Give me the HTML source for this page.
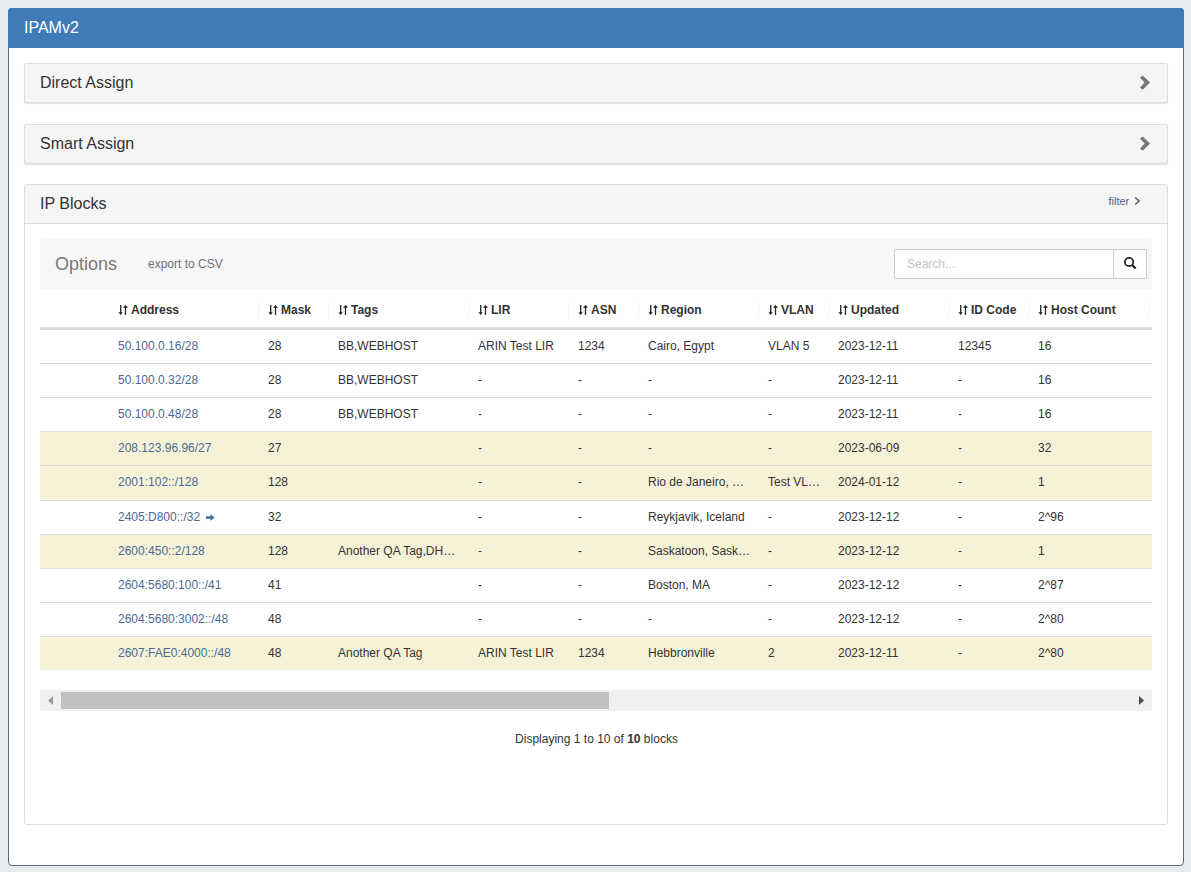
<!DOCTYPE html>
<html><head><meta charset="utf-8">
<style>
*{box-sizing:border-box;margin:0;padding:0}
html,body{width:1191px;height:872px;overflow:hidden}
body{background:#e9ecef;font-family:"Liberation Sans",sans-serif;color:#333;font-size:12px;position:relative}
.abs{position:absolute}
.outer{position:absolute;left:8px;top:8px;width:1176px;height:858px;border:1px solid #586c7e;border-radius:4px;background:#fff}
.outer-h{position:absolute;left:8px;top:8px;width:1176px;height:40px;background:#3e7bb8;border-radius:4px 4px 0 0;color:#fff;font-size:16px;padding-left:16px;line-height:39px}
.pnl{position:absolute;left:24px;width:1144px;height:40px;background:#f5f5f5;border:1px solid #ddd;border-radius:2px;box-shadow:0 1px 1px rgba(0,0,0,.12)}
.ptitle{position:absolute;left:40px;font-size:16px;line-height:18px;color:#333}
.ipb{position:absolute;left:24px;top:184px;width:1144px;height:641px;border:1px solid #ddd;border-radius:3px;background:#fff}
.ipb-h{position:absolute;left:25px;top:185px;width:1142px;height:39px;background:#f5f5f5;border-bottom:1px solid #ddd;border-radius:3px 3px 0 0}
.filter{position:absolute;left:1108.5px;top:193px;color:#45638a;font-size:11px;line-height:16px}
.opts{position:absolute;left:40px;top:238px;width:1112px;height:51px;background:#f7f7f7;border-radius:4px}
.o{position:absolute;left:55px;top:253px;line-height:22px;font-size:18px;color:#777}
.e{position:absolute;left:148px;top:257px;line-height:15px;font-size:12px;color:#707070}
.search{position:absolute;left:894px;top:249px;width:220px;height:30px;border:1px solid #ccc;border-radius:2px 0 0 2px;background:#fff;color:#c4c4c4;font-size:12px;line-height:28px;padding-left:12px}
.sbtn{position:absolute;left:1113px;top:249px;width:34px;height:30px;border:1px solid #ccc;border-radius:0 2px 2px 0;background:#fff}
.th{position:absolute;top:302px;line-height:17px;font-weight:bold;font-size:12px;color:#333;white-space:nowrap}
.th .si{position:relative;top:1px;margin-right:3px;vertical-align:baseline}
.sep{position:absolute;top:303px;width:1px;height:15px;background:#f4f4f4}
.hb{position:absolute;left:40px;top:327px;width:1112px;height:3px;background:#dadada}
.tr{position:absolute;left:40px;width:1112px}
.tr.y{background:#f6f2d8}
.tr.bt{border-top:1px solid #ddd}
.td{position:absolute;padding-top:8px;line-height:17px;font-size:12px;color:#333;white-space:nowrap}
.td.a{color:#4b6b93}
.arr{margin-left:2px;vertical-align:-1px}
.sb{position:absolute;left:40px;top:690px;width:1112px;height:21px;background:#f0f0f0}
.thumb{position:absolute;left:61px;top:692px;width:548px;height:17px;background:#c1c1c1}
.disp{position:absolute;left:1px;width:1191px;top:732px;text-align:center;line-height:15px;font-size:12px;color:#333}
</style></head><body>
<div class="outer"></div>
<div class="outer-h">IPAMv2</div>
<div class="pnl" style="top:63px"></div>
<div class="ptitle" style="top:74px">Direct Assign</div>
<div class="pnl" style="top:124px"></div>
<div class="ptitle" style="top:135px">Smart Assign</div>
<svg class="abs" style="left:0;top:0" width="1191" height="200"><polygon points="1140,77.7 1142.6,75.6 1150.1,82.5 1142.6,89.8 1140,87.4 1144.6,82.5" fill="#777"/><polygon points="1140,138.7 1142.6,136.6 1150.1,143.5 1142.6,150.8 1140,148.4 1144.6,143.5" fill="#777"/></svg>
<div class="ipb"></div>
<div class="ipb-h"></div>
<div class="ptitle" style="top:195px">IP Blocks</div>
<div class="filter">filter</div>
<svg class="abs" style="left:1133px;top:196px" width="9" height="10"><path d="M2.2 1.6 L6.2 5 L2.2 8.4" fill="none" stroke="#44546a" stroke-width="1.3"/></svg>
<div class="opts"></div>
<div class="o">Options</div>
<div class="e">export to CSV</div>
<div class="search">Search...</div>
<div class="sbtn"></div>
<svg class="abs" style="left:1122px;top:255px" width="16" height="16"><circle cx="7.1" cy="7" r="4.2" fill="none" stroke="#222" stroke-width="1.8"/><path d="M9.9 9.8 L13.6 13.5" stroke="#222" stroke-width="2.3"/></svg>
<div class="th" style="left:118px"><svg class="si" width="10" height="10" viewBox="0 0 10 10"><path d="M2.05 0h1.3v7.2h1.45L2.7 9.9 0.4 7.2h1.65z M6.85 9.9h1.3V2.8h1.85L7.5 0 5 2.8h1.85z" fill="#222"/></svg><span>Address</span></div>
<div class="th" style="left:268px"><svg class="si" width="10" height="10" viewBox="0 0 10 10"><path d="M2.05 0h1.3v7.2h1.45L2.7 9.9 0.4 7.2h1.65z M6.85 9.9h1.3V2.8h1.85L7.5 0 5 2.8h1.85z" fill="#222"/></svg><span>Mask</span></div>
<div class="th" style="left:338px"><svg class="si" width="10" height="10" viewBox="0 0 10 10"><path d="M2.05 0h1.3v7.2h1.45L2.7 9.9 0.4 7.2h1.65z M6.85 9.9h1.3V2.8h1.85L7.5 0 5 2.8h1.85z" fill="#222"/></svg><span>Tags</span></div>
<div class="th" style="left:478px"><svg class="si" width="10" height="10" viewBox="0 0 10 10"><path d="M2.05 0h1.3v7.2h1.45L2.7 9.9 0.4 7.2h1.65z M6.85 9.9h1.3V2.8h1.85L7.5 0 5 2.8h1.85z" fill="#222"/></svg><span>LIR</span></div>
<div class="th" style="left:578px"><svg class="si" width="10" height="10" viewBox="0 0 10 10"><path d="M2.05 0h1.3v7.2h1.45L2.7 9.9 0.4 7.2h1.65z M6.85 9.9h1.3V2.8h1.85L7.5 0 5 2.8h1.85z" fill="#222"/></svg><span>ASN</span></div>
<div class="th" style="left:648px"><svg class="si" width="10" height="10" viewBox="0 0 10 10"><path d="M2.05 0h1.3v7.2h1.45L2.7 9.9 0.4 7.2h1.65z M6.85 9.9h1.3V2.8h1.85L7.5 0 5 2.8h1.85z" fill="#222"/></svg><span>Region</span></div>
<div class="th" style="left:768px"><svg class="si" width="10" height="10" viewBox="0 0 10 10"><path d="M2.05 0h1.3v7.2h1.45L2.7 9.9 0.4 7.2h1.65z M6.85 9.9h1.3V2.8h1.85L7.5 0 5 2.8h1.85z" fill="#222"/></svg><span>VLAN</span></div>
<div class="th" style="left:838px"><svg class="si" width="10" height="10" viewBox="0 0 10 10"><path d="M2.05 0h1.3v7.2h1.45L2.7 9.9 0.4 7.2h1.65z M6.85 9.9h1.3V2.8h1.85L7.5 0 5 2.8h1.85z" fill="#222"/></svg><span>Updated</span></div>
<div class="th" style="left:958px"><svg class="si" width="10" height="10" viewBox="0 0 10 10"><path d="M2.05 0h1.3v7.2h1.45L2.7 9.9 0.4 7.2h1.65z M6.85 9.9h1.3V2.8h1.85L7.5 0 5 2.8h1.85z" fill="#222"/></svg><span>ID Code</span></div>
<div class="th" style="left:1038px"><svg class="si" width="10" height="10" viewBox="0 0 10 10"><path d="M2.05 0h1.3v7.2h1.45L2.7 9.9 0.4 7.2h1.65z M6.85 9.9h1.3V2.8h1.85L7.5 0 5 2.8h1.85z" fill="#222"/></svg><span>Host Count</span></div>
<div class="sep" style="left:258px"></div>
<div class="sep" style="left:328px"></div>
<div class="sep" style="left:468px"></div>
<div class="sep" style="left:568px"></div>
<div class="sep" style="left:638px"></div>
<div class="sep" style="left:758px"></div>
<div class="sep" style="left:828px"></div>
<div class="sep" style="left:948px"></div>
<div class="sep" style="left:1028px"></div>
<div class="sep" style="left:1148px"></div>
<div class="tr" style="top:329px;height:34px"></div>
<div class="td a" style="left:118px;top:330px">50.100.0.16/28</div>
<div class="td" style="left:268px;top:330px">28</div>
<div class="td" style="left:338px;top:330px">BB,WEBHOST</div>
<div class="td" style="left:478px;top:330px">ARIN Test LIR</div>
<div class="td" style="left:578px;top:330px">1234</div>
<div class="td" style="left:648px;top:330px">Cairo, Egypt</div>
<div class="td" style="left:768px;top:330px">VLAN 5</div>
<div class="td" style="left:838px;top:330px">2023-12-11</div>
<div class="td" style="left:958px;top:330px">12345</div>
<div class="td" style="left:1038px;top:330px">16</div>
<div class="tr bt" style="top:363px;height:34px"></div>
<div class="td a" style="left:118px;top:364px">50.100.0.32/28</div>
<div class="td" style="left:268px;top:364px">28</div>
<div class="td" style="left:338px;top:364px">BB,WEBHOST</div>
<div class="td" style="left:478px;top:364px">-</div>
<div class="td" style="left:578px;top:364px">-</div>
<div class="td" style="left:648px;top:364px">-</div>
<div class="td" style="left:768px;top:364px">-</div>
<div class="td" style="left:838px;top:364px">2023-12-11</div>
<div class="td" style="left:958px;top:364px">-</div>
<div class="td" style="left:1038px;top:364px">16</div>
<div class="tr bt" style="top:397px;height:34px"></div>
<div class="td a" style="left:118px;top:398px">50.100.0.48/28</div>
<div class="td" style="left:268px;top:398px">28</div>
<div class="td" style="left:338px;top:398px">BB,WEBHOST</div>
<div class="td" style="left:478px;top:398px">-</div>
<div class="td" style="left:578px;top:398px">-</div>
<div class="td" style="left:648px;top:398px">-</div>
<div class="td" style="left:768px;top:398px">-</div>
<div class="td" style="left:838px;top:398px">2023-12-11</div>
<div class="td" style="left:958px;top:398px">-</div>
<div class="td" style="left:1038px;top:398px">16</div>
<div class="tr y bt" style="top:431px;height:34px"></div>
<div class="td a" style="left:118px;top:432px">208.123.96.96/27</div>
<div class="td" style="left:268px;top:432px">27</div>
<div class="td" style="left:478px;top:432px">-</div>
<div class="td" style="left:578px;top:432px">-</div>
<div class="td" style="left:648px;top:432px">-</div>
<div class="td" style="left:768px;top:432px">-</div>
<div class="td" style="left:838px;top:432px">2023-06-09</div>
<div class="td" style="left:958px;top:432px">-</div>
<div class="td" style="left:1038px;top:432px">32</div>
<div class="tr y bt" style="top:465px;height:35px"></div>
<div class="td a" style="left:118px;top:466px">2001:102::/128</div>
<div class="td" style="left:268px;top:466px">128</div>
<div class="td" style="left:478px;top:466px">-</div>
<div class="td" style="left:578px;top:466px">-</div>
<div class="td" style="left:648px;top:466px">Rio de Janeiro, …</div>
<div class="td" style="left:768px;top:466px">Test VL…</div>
<div class="td" style="left:838px;top:466px">2024-01-12</div>
<div class="td" style="left:958px;top:466px">-</div>
<div class="td" style="left:1038px;top:466px">1</div>
<div class="tr bt" style="top:500px;height:34px"></div>
<div class="td a" style="left:118px;top:501px">2405:D800::/32 <svg class="arr" width="11" height="9" viewBox="0 0 11 9"><path d="M1 3.2h4.4V1.3L9.8 4.5 5.4 7.7V5.8H1z" fill="#3f6ea5"/></svg></div>
<div class="td" style="left:268px;top:501px">32</div>
<div class="td" style="left:478px;top:501px">-</div>
<div class="td" style="left:578px;top:501px">-</div>
<div class="td" style="left:648px;top:501px">Reykjavik, Iceland</div>
<div class="td" style="left:768px;top:501px">-</div>
<div class="td" style="left:838px;top:501px">2023-12-12</div>
<div class="td" style="left:958px;top:501px">-</div>
<div class="td" style="left:1038px;top:501px">2^96</div>
<div class="tr y bt" style="top:534px;height:34px"></div>
<div class="td a" style="left:118px;top:535px">2600:450::2/128</div>
<div class="td" style="left:268px;top:535px">128</div>
<div class="td" style="left:338px;top:535px">Another QA Tag,DH…</div>
<div class="td" style="left:478px;top:535px">-</div>
<div class="td" style="left:578px;top:535px">-</div>
<div class="td" style="left:648px;top:535px">Saskatoon, Sask…</div>
<div class="td" style="left:768px;top:535px">-</div>
<div class="td" style="left:838px;top:535px">2023-12-12</div>
<div class="td" style="left:958px;top:535px">-</div>
<div class="td" style="left:1038px;top:535px">1</div>
<div class="tr bt" style="top:568px;height:34px"></div>
<div class="td a" style="left:118px;top:569px">2604:5680:100::/41</div>
<div class="td" style="left:268px;top:569px">41</div>
<div class="td" style="left:478px;top:569px">-</div>
<div class="td" style="left:578px;top:569px">-</div>
<div class="td" style="left:648px;top:569px">Boston, MA</div>
<div class="td" style="left:768px;top:569px">-</div>
<div class="td" style="left:838px;top:569px">2023-12-12</div>
<div class="td" style="left:958px;top:569px">-</div>
<div class="td" style="left:1038px;top:569px">2^87</div>
<div class="tr bt" style="top:602px;height:34px"></div>
<div class="td a" style="left:118px;top:603px">2604:5680:3002::/48</div>
<div class="td" style="left:268px;top:603px">48</div>
<div class="td" style="left:478px;top:603px">-</div>
<div class="td" style="left:578px;top:603px">-</div>
<div class="td" style="left:648px;top:603px">-</div>
<div class="td" style="left:768px;top:603px">-</div>
<div class="td" style="left:838px;top:603px">2023-12-12</div>
<div class="td" style="left:958px;top:603px">-</div>
<div class="td" style="left:1038px;top:603px">2^80</div>
<div class="tr y bt" style="top:636px;height:34px"></div>
<div class="td a" style="left:118px;top:637px">2607:FAE0:4000::/48</div>
<div class="td" style="left:268px;top:637px">48</div>
<div class="td" style="left:338px;top:637px">Another QA Tag</div>
<div class="td" style="left:478px;top:637px">ARIN Test LIR</div>
<div class="td" style="left:578px;top:637px">1234</div>
<div class="td" style="left:648px;top:637px">Hebbronville</div>
<div class="td" style="left:768px;top:637px">2</div>
<div class="td" style="left:838px;top:637px">2023-12-11</div>
<div class="td" style="left:958px;top:637px">-</div>
<div class="td" style="left:1038px;top:637px">2^80</div>
<div class="hb"></div>
<div class="sb"></div>
<div class="thumb"></div>
<svg class="abs" style="left:46px;top:694px" width="10" height="12"><path d="M7.1 2 L7.1 11 L2 6.5z" fill="#9c9c9c"/></svg>
<svg class="abs" style="left:1136px;top:694px" width="10" height="12"><path d="M3 2 L3 11 L8 6.5z" fill="#505050"/></svg>
<div class="disp">Displaying 1 to 10 of <b>10</b> blocks</div>
</body></html>
